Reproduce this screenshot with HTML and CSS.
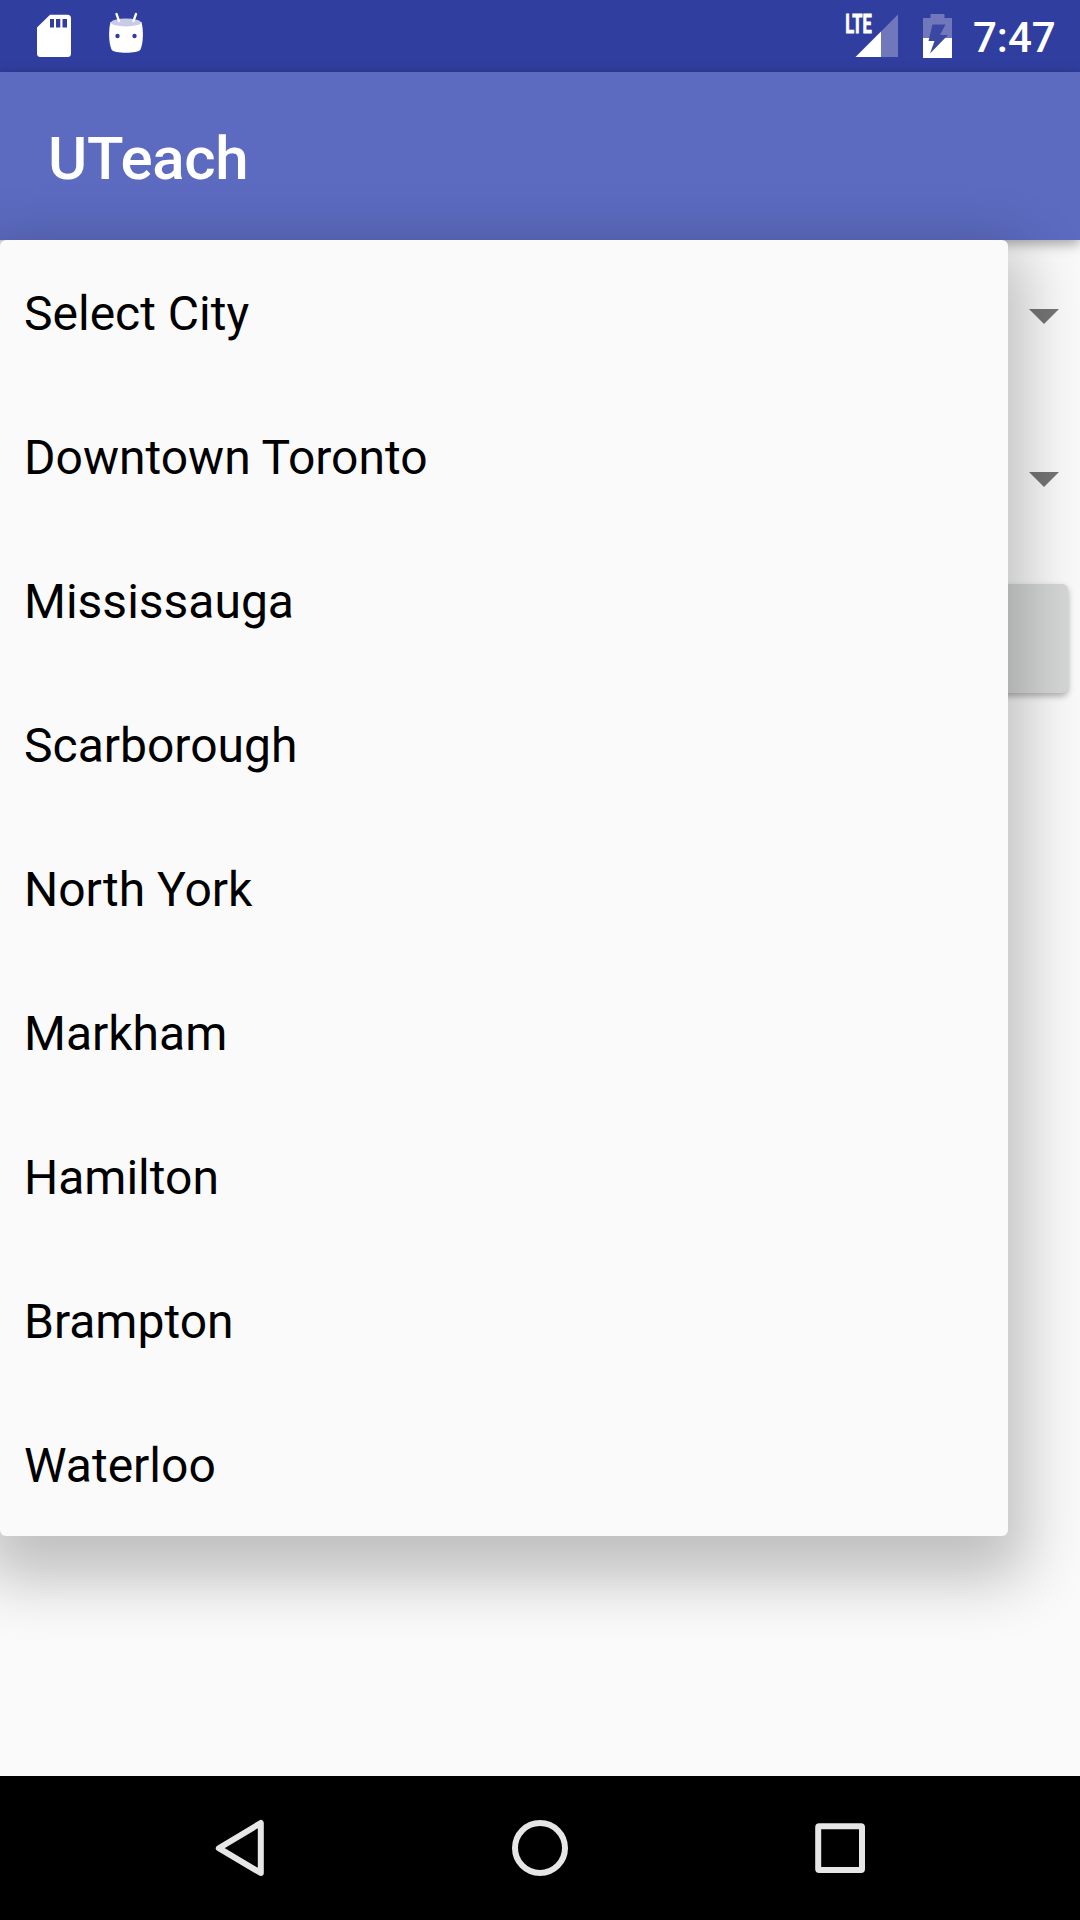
FILE: index.html
```html
<!DOCTYPE html>
<html lang="en">
<head>
<meta charset="utf-8">
<title>UTeach</title>
<link rel="stylesheet" href="styles.css">
</head>
<body>
<div class="screen">
  <header class="status-bar">
    <svg class="status-icons" width="160" height="72" viewBox="0 0 160 72">
      <path fill="#fff" fill-rule="evenodd" d="M50 14.700H67.500a3.500 3.500 0 0 1 3.500 3.500V53.500a3.500 3.500 0 0 1-3.500 3.500H40.500a3.500 3.500 0 0 1-3.500-3.500V27.500ZM50 19V27.500H54V19ZM56 19V27.500H60.300V19ZM62.500 19V27.500H67V19Z"/>
      <path fill="#fff" d="M110.500 22C108.500 30 108.500 42 111.500 49.500C113.500 53.800 138.500 53.800 140.500 49.500C143.500 42 143.500 30 141.500 22Z"/>
      <ellipse cx="126" cy="22.500" rx="15" ry="3.900" fill="#c8cbe6"/>
      <path stroke="#fff" stroke-width="2.300" stroke-linecap="round" d="M116.500 14L119 21M136 14L133.500 21"/>
      <circle cx="117.500" cy="36" r="2.200" fill="#303f9f"/>
      <circle cx="134.500" cy="36" r="2.200" fill="#303f9f"/>
    </svg>
    <div class="status-right">
      <svg width="130" height="72" viewBox="840 0 130 72">
        <path fill="#7078bb" d="M898 14.500V57H881V31.500Z"/>
        <path fill="#fff" d="M881 31.500V57H855.500Z"/>
        <text class="lte" x="845.300" y="33" textLength="26.500" lengthAdjust="spacingAndGlyphs">LTE</text>
        <path fill="#7078bb" d="M930.500 14H944.500V18H952V38H923V18H930.500Z"/>
        <path fill="#fff" d="M923 38H952V58H923Z"/>
        <path fill="#3a48a2" d="M932.500 24.500H945.500L940 35H948L930 53.500L934.500 41H928.500Z"/>
      </svg>
      <span class="clock">7:47</span>
    </div>
  </header>
  <div class="app-bar"><h1 class="title">UTeach</h1></div>
  <main class="content">
    <div class="spinner"><i class="caret"></i></div>
    <div class="spinner spinner-second"><i class="caret"></i></div>
    <div class="button"></div>
  </main>
  <nav class="nav-bar">
    <svg width="1080" height="144" viewBox="0 0 1080 144" fill="none" stroke="#e6e6e6" stroke-width="6" stroke-linejoin="round">
      <path d="M260.800 47V97L218.800 72.200Z"/>
      <circle cx="540" cy="72" r="25"/>
      <rect x="818.200" y="50.200" width="43.800" height="43.800" rx="1"/>
    </svg>
  </nav>
  <ul class="dropdown">
    <li>Select City</li>
    <li>Downtown Toronto</li>
    <li>Mississauga</li>
    <li>Scarborough</li>
    <li>North York</li>
    <li>Markham</li>
    <li>Hamilton</li>
    <li>Brampton</li>
    <li>Waterloo</li>
  </ul>
</div>
</body>
</html>
```
FILE: styles.css
```css
* { box-sizing: border-box; }
body { margin: 0; font-family: Roboto, sans-serif; }
.screen {
  position: relative;
  display: flex;
  flex-direction: column;
  width: 1080px;
  height: 1920px;
  overflow: hidden;
  background: #fafafa;
}
.status-bar {
  display: flex;
  justify-content: space-between;
  height: 72px;
  background: #303f9f;
}
.status-bar svg { display: block; }
.status-right { display: flex; width: 240px; }
.lte { font: 700 25px Roboto, sans-serif; fill: #fff; stroke: #fff; stroke-width: .8px; }
.clock {
  padding-left: 3px;
  color: #fff;
  font-size: 42px;
  font-weight: 500;
  line-height: 76px;
}
.app-bar {
  z-index: 1;
  display: flex;
  align-items: center;
  height: 168px;
  padding-left: 48px;
  background: #5c6bc0;
  box-shadow: 0 4px 12px rgba(0, 0, 0, .35);
}
.title {
  margin: 0;
  padding-top: 5px;
  color: #fff;
  font-size: 60px;
  font-weight: 500;
  letter-spacing: -.3px;
  line-height: 70px;
}
.content { flex: 1; padding: 0 12px; }
.spinner {
  display: flex;
  justify-content: flex-end;
  align-items: center;
  height: 153px;
  padding-right: 9px;
}
.spinner-second { height: 173px; }
.caret {
  width: 30px;
  height: 15px;
  background: #757575;
  clip-path: polygon(0 0, 100% 0, 50% 100%);
}
.button {
  height: 109px;
  margin-top: 18px;
  border-radius: 6px;
  background: #d6d7d7;
  box-shadow: 0 3px 6px rgba(0, 0, 0, .3);
}
.nav-bar { height: 144px; background: #000; }
.nav-bar svg { display: block; }
.dropdown {
  position: absolute;
  z-index: 2;
  top: 240px;
  left: 0;
  width: 1008px;
  margin: 0;
  padding: 0;
  list-style: none;
  border-radius: 6px;
  background: #fafafa;
  box-shadow: 0 25px 62px 18px rgba(0, 0, 0, .24);
}
.dropdown li {
  height: 144px;
  padding: 3px 0 0 24px;
  color: #000;
  font-size: 48px;
  line-height: 141px;
}
```
